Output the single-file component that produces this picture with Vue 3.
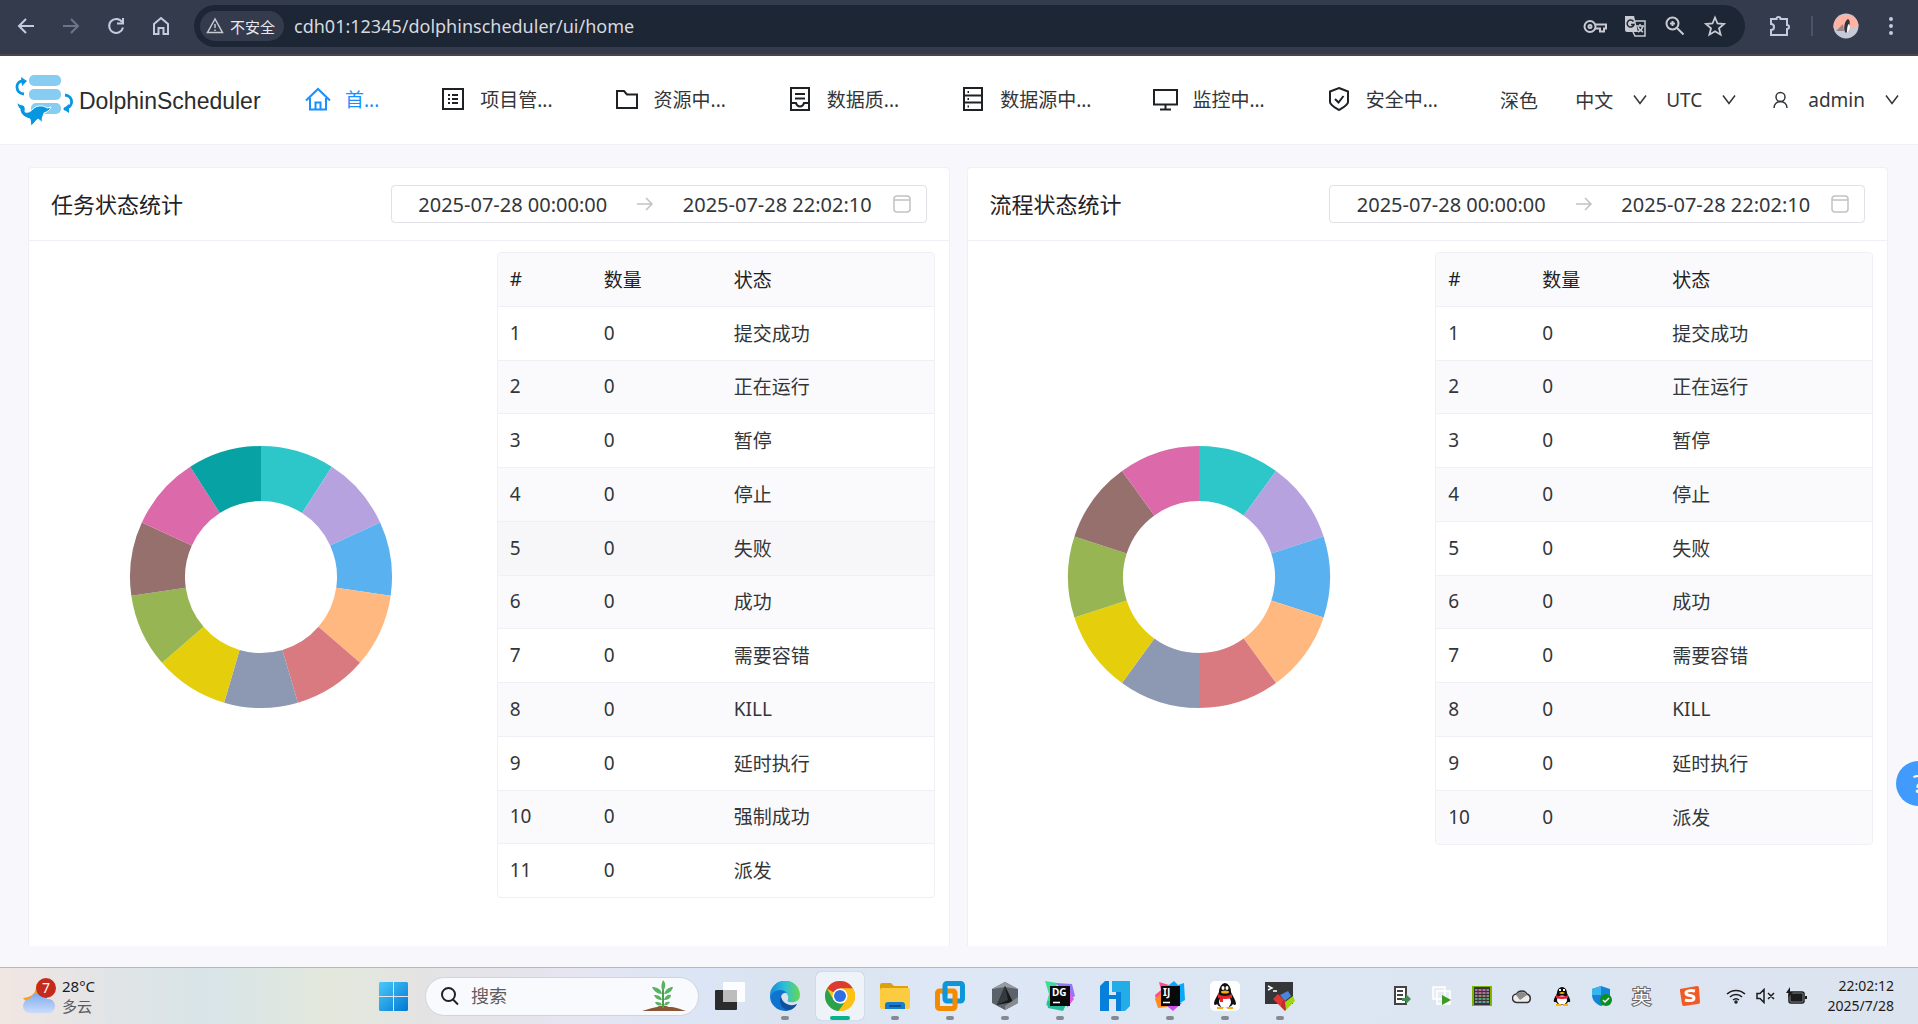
<script setup>
const navItems = [
  { label: '首...', active: true, path: 'M2 15.5L14 4l12 11.5M6 13v11.500h16V13M11.500 24v-6.500h5V24' },
  { label: '项目管...', path: 'M4 4h20v20H4zM9 10h2M9 14h2M9 18h2M13 10h6M13 14h6M13 18h6' },
  { label: '资源中...', path: 'M4 6h7l3 3.500h10V23H4z' },
  { label: '数据质...', path: 'M5 3h18v22H5zM9 9h10M9 13.500h10M5 18h5c1 4.500 7 4.500 8 0h5' },
  { label: '数据源中...', path: 'M5 3h18v22H5zM5 10.500h18M5 17.500h18M8.500 7h1.500M8.500 14h1.500M8.500 21.500h1.500' },
  { label: '监控中...', path: 'M3 5h23v14.500H3zM14.500 20v4M9 24.500h11' },
  { label: '安全中...', path: 'M14 3l9 3.500v10.500c0 3-5 5.500-9 8c-4-2.500-9-5-9-8V6.500zM10 14l3.500 3.500l5-6.500' },
]

const palette = ['#2ec7c9', '#b6a2de', '#5ab1ef', '#ffb980', '#d87a80', '#8d98b3', '#e5cf0d', '#97b552', '#95706d', '#dc69aa', '#07a2a4']

const commonStates = ['提交成功', '正在运行', '暂停', '停止', '失败', '成功', '需要容错', 'KILL', '延时执行']

const panels = [
  { id: 'task', title: '任务状态统计', states: [...commonStates, '强制成功', '派发'], highlighted: 4 },
  { id: 'process', title: '流程状态统计', states: [...commonStates, '派发'], highlighted: -1 },
].map((panel) => ({ ...panel, slices: ring(panel.states.length) }))

function ring(count) {
  const outer = 131
  const inner = 76
  const point = (radius, turn) => {
    const angle = turn * 2 * Math.PI
    return `${(132 + radius * Math.sin(angle)).toFixed(2)} ${(132 - radius * Math.cos(angle)).toFixed(2)}`
  }
  return Array.from({ length: count }, (_, i) => {
    const a = i / count
    const b = (i + 1) / count
    return {
      fill: palette[i],
      d: `M${point(outer, a)}A${outer} ${outer} 0 0 1 ${point(outer, b)}L${point(inner, b)}A${inner} ${inner} 0 0 0 ${point(inner, a)}Z`,
    }
  })
}
</script>

<template>
  <div class="screen">
    <div class="toolbar">
      <div class="tool-nav">
        <button aria-label="后退"><svg width="22" height="22" viewBox="0 0 22 22"><path d="M19 11H4M11 4l-7 7l7 7" /></svg></button>
        <button aria-label="前进" class="dim"><svg width="22" height="22" viewBox="0 0 22 22"><path d="M3 11h15M11 4l7 7l-7 7" /></svg></button>
        <button aria-label="刷新"><svg width="22" height="22" viewBox="0 0 22 22"><path d="M17 7A7 7 0 1 0 18 12.500M18 3v5.500h-6" /></svg></button>
        <button aria-label="主页"><svg width="22" height="22" viewBox="0 0 22 22"><path d="M4 9l7-6l7 6v10h-4.500v-6h-5v6H4z" /></svg></button>
      </div>
      <div class="omnibox">
        <button class="chip">
          <svg width="18" height="18" viewBox="0 0 18 18"><path d="M9 2L1.500 15.500h15zM9 7v4M9 12.500v1.500" /></svg>
          <span>不安全</span>
        </button>
        <input class="url" aria-label="地址" value="cdh01:12345/dolphinscheduler/ui/home" />
        <div class="omni-icons">
          <button aria-label="密码"><svg width="24" height="24" viewBox="0 0 24 24"><circle cx="7" cy="12.500" r="5.500" /><circle cx="7" cy="12.500" r="1.500" /><path d="M12 10.500h11v4h-2v3h-4v-3h-5" /></svg></button>
          <button aria-label="翻译">
            <svg width="24" height="24" viewBox="0 0 24 24">
              <path d="M12 7h10v15H12l-2-4M13 12h8M17 10v2M20 12c-1 4-3 5-5 6M15 13c1 3 3 4 5 5" stroke-width="1.500" />
              <path d="M2 2h9l4 16H4a2 2 0 0 1-2-2z" class="solid" />
              <path d="M10.500 7.500a3.500 3.500 0 1 0 .5 3H8" class="cut" />
            </svg>
          </button>
          <button aria-label="缩放"><svg width="24" height="24" viewBox="0 0 24 24"><circle cx="9.500" cy="9.500" r="6" /><path d="M14 14l6.500 6.500M7 9.500h5M9.500 7v5" /></svg></button>
          <button aria-label="收藏"><svg width="24" height="24" viewBox="0 0 24 24"><path d="M12 3.500l2.500 6l6.500.5l-5 4.300l1.600 6.400L12 17.300l-5.600 3.400L8 14.300L3 10l6.500-.5z" stroke-width="1.800" /></svg></button>
        </div>
      </div>
      <div class="tool-end">
        <button aria-label="扩展程序"><svg width="24" height="24" viewBox="0 0 24 24"><path d="M3 5h5.500a2 2 0 0 1 4 0H19v6a2 2 0 0 1 0 4v6H3v-5a3 3 0 0 0 0-6z" /></svg></button>
        <i class="divider"></i>
        <button aria-label="用户">
          <svg width="26" height="26" viewBox="0 0 26 26">
            <circle cx="13" cy="13" r="12.500" fill="#c5cad8" stroke="none" />
            <path d="M.5 15A12.500 12.500 0 0 1 25.500 13L14 16z" fill="#ffb3a3" stroke="none" />
            <path d="M3 18l7-7l1 7z" fill="#9b8582" stroke="none" />
            <path d="M12 19c-2-4 0-12 3-13c3 1 2 8-2 14z" fill="#33333a" stroke="none" />
            <path d="M14 19c0-5 1-8 2-8c2 3 0 7-2 8z" fill="#fff" stroke="none" />
          </svg>
        </button>
        <button aria-label="菜单"><svg width="8" height="24" viewBox="0 0 8 24"><path d="M4 5v.1M4 12v.1M4 19v.1" stroke-width="4" stroke-linecap="round" /></svg></button>
      </div>
    </div>

    <header class="header">
      <a class="brand" href="#">
        <svg width="60" height="52" viewBox="0 0 60 52">
          <g fill="#86cdf1"><rect x="14" y="1" width="32" height="11" rx="5" /><rect x="14" y="15" width="32" height="11" rx="5" /><rect x="16" y="29" width="30" height="11" rx="5" /></g>
          <g fill="none" stroke="#0797e0" stroke-width="2.800"><path d="M9 20C0 19 0 8 7 7" /><path d="M49 35c10-1 10-13 1-14" /></g>
          <path d="M6 3l6 4l-5 5zM54 30l-6 5l6 4z" fill="#0797e0" />
          <path d="M2 28c1 2 4 3 6 3c3 2 2 5 2 7c4 1 6-1 8-3c4-4 10-4 14-1l4-1c-1 3-4 5-7 6c-1 4-3 6-1 10l-5-4c-2 1-3 4-7 7l-1-7C8 43 5 39 5 35c-2-2-3-4-3-7z" fill="#0797e0" stroke="#fff" stroke-width="1" />
        </svg>
        <span>DolphinScheduler</span>
      </a>
      <nav class="nav">
        <a v-for="item in navItems" :key="item.label" href="#" :class="{ active: item.active }">
          <svg width="28" height="28" viewBox="0 0 28 28"><path :d="item.path" /></svg>
          <span>{{ item.label }}</span>
        </a>
      </nav>
      <div class="settings">
        <button>深色</button>
        <button>中文<svg width="14" height="12" viewBox="0 0 14 12"><path d="M1 1.500l6 8l6-8" /></svg></button>
        <button class="zone">UTC<svg width="14" height="12" viewBox="0 0 14 12"><path d="M1 1.500l6 8l6-8" /></svg></button>
        <button>
          <svg width="15" height="18" viewBox="0 0 15 18"><circle cx="7.500" cy="6" r="4.500" /><path d="M1 17c0-4 3-6.500 6.500-6.500S14 13 14 17" /></svg>
          admin<svg width="14" height="12" viewBox="0 0 14 12"><path d="M1 1.500l6 8l6-8" /></svg>
        </button>
      </div>
    </header>

    <main class="content">
      <section v-for="panel in panels" :key="panel.id" class="card">
        <div class="card-head">
          <h2>{{ panel.title }}</h2>
          <div class="picker">
            <input value="2025-07-28 00:00:00" :aria-label="panel.title + '开始时间'" />
            <svg width="18" height="16" viewBox="0 0 18 16"><path d="M1 8h15M10 2l6 6l-6 6" /></svg>
            <input value="2025-07-28 22:02:10" :aria-label="panel.title + '结束时间'" />
            <svg width="18" height="18" viewBox="0 0 18 18"><rect x="1" y="1" width="16" height="16" rx="3" /><path d="M1 5h16" /></svg>
          </div>
        </div>
        <div class="card-body">
          <div class="chart">
            <svg width="264" height="264" viewBox="0 0 264 264" role="img" :aria-label="panel.title">
              <path v-for="slice in panel.slices" :key="slice.fill" :d="slice.d" :fill="slice.fill" />
            </svg>
          </div>
          <div class="table-box">
            <table>
              <thead>
                <tr><th class="col-index">#</th><th class="col-count">数量</th><th>状态</th></tr>
              </thead>
              <tbody>
                <tr v-for="(state, i) in panel.states" :key="state" :class="{ hover: i === panel.highlighted }">
                  <td>{{ i + 1 }}</td><td>0</td><td>{{ state }}</td>
                </tr>
              </tbody>
            </table>
          </div>
        </div>
      </section>
      <button class="help" aria-label="帮助">?</button>
    </main>

    <footer class="taskbar">
      <div class="weather">
        <svg width="36" height="40" viewBox="0 0 36 40">
          <defs><linearGradient id="cloud" x1="0" y1="0" x2="0" y2="1"><stop offset="0" stop-color="#7da9ee" /><stop offset="1" stop-color="#cbdcfa" /></linearGradient></defs>
          <path d="M14 8c1 9-4 13-13 14c4 6 12 6 18 2V12z" fill="#f7a11b" />
          <path d="M8 37a7 7 0 0 1 0-14a9 9 0 0 1 17 0a7 7 0 0 1 2 14z" fill="url(#cloud)" />
          <circle cx="24" cy="12" r="10" fill="#c42b1c" />
          <text x="24" y="17" text-anchor="middle" font-size="14" fill="#fff">7</text>
        </svg>
        <div><p>28°C</p><p class="muted">多云</p></div>
      </div>
      <button class="start" aria-label="开始">
        <svg width="29" height="29" viewBox="0 0 29 29">
          <defs><linearGradient id="win" x1="0" y1="0" x2="1" y2="1"><stop offset="0" stop-color="#4cc9fa" /><stop offset="1" stop-color="#0078d4" /></linearGradient></defs>
          <path d="M1 0h13v14H0V1zM15 0h13l1 1v13H15zM0 15h14v14H1l-1-1zM15 15h14v13l-1 1H15z" fill="url(#win)" />
        </svg>
      </button>
      <label class="search">
        <svg width="20" height="20" viewBox="0 0 20 20"><circle cx="8.500" cy="8.500" r="6.500" /><path d="M13 13.500l5 5" /></svg>
        <input placeholder="搜索" aria-label="搜索" />
        <svg width="46" height="32" viewBox="0 0 46 32">
          <path d="M1 31c5-1 8-3 15-4c5-2 9-1 12 0c7 0 10 2 17 4z" fill="#8a5636" />
          <path d="M22 28V8" stroke="#4b9c4d" stroke-width="2" />
          <path d="M22 11c-3-4-1-8 0-11c3 3 3 7 0 11zM21 14c-5 0-8-3-10-7c5 0 9 2 10 7zM23 14c2-5 5-7 9-7c-1 4-4 7-9 7zM21 20c-4 0-7-2-8-5c4 0 7 1 8 5zM23 20c1-4 4-6 7-5c0 3-3 5-7 5zM21 25c-4 1-6 0-7-3c4 0 6 0 7 3zM23 25c1-3 3-4 6-3c-1 2-3 4-6 3z" fill="#58b260" />
        </svg>
      </label>
      <div class="apps">
        <button aria-label="任务视图">
          <svg width="30" height="30" viewBox="0 0 30 30"><rect x="0" y="9" width="22" height="20" rx="1" fill="#2c2c2c" /><rect x="8" y="1" width="22" height="20" rx="1" fill="#fff" opacity=".9" /><rect x="8" y="9" width="14" height="12" fill="#bdbdbd" /></svg>
        </button>
        <button aria-label="Edge" class="open">
          <svg width="30" height="30" viewBox="0 0 30 30">
            <defs><linearGradient id="edge" x1="0" y1="0" x2="1" y2="0"><stop offset="0" stop-color="#1689d8" /><stop offset=".5" stop-color="#2ebfd8" /><stop offset="1" stop-color="#69d84f" /></linearGradient></defs>
            <path d="M0 15a15 15 0 0 1 30-1c0 6-5 8-11 7c-3-1 0-2-1-6c-2-6-12-7-18 0z" fill="url(#edge)" />
            <path d="M0 15c4-7 13-8 17-3c-5-1-7 4-6 8c1 5 8 8 16 3c-3 5-7 7-12 7A15 15 0 0 1 0 15z" fill="#0f74cf" />
            <path d="M11 15c-3 6 1 14 8 14c4-1 7-4 8-6c-6 3-15 0-16-8z" fill="#10509e" />
          </svg>
        </button>
        <button aria-label="Chrome" class="open current">
          <svg width="30" height="30" viewBox="0 0 30 30">
            <circle cx="15" cy="15" r="15" fill="#fbc116" />
            <path d="M15 15L2 7.500A15 15 0 0 1 28 7.500H15z" fill="#dc3b30" />
            <path d="M2 7.500l6.500 11.300L15 22.500h6L14 30A15 15 0 0 1 2 7.500z" fill="#2ba14c" />
            <path d="M15 7.500h13A15 15 0 0 1 13.500 30l8-11z" fill="#fbc116" />
            <circle cx="15" cy="15" r="7.500" fill="#fff" /><circle cx="15" cy="15" r="6" fill="#2f6fe4" />
          </svg>
        </button>
        <button aria-label="资源管理器" class="open">
          <svg width="30" height="30" viewBox="0 0 30 30"><path d="M0 4q0-2 2-2h9l3 3h14v6H0z" fill="#dda10e" /><rect x="0" y="7" width="30" height="21" rx="2" fill="#fdcb3f" /><path d="M5 28v-4q0-3 3-3h14q3 0 3 3v4z" fill="#167ccc" /><path d="M9 25h12" stroke="#0b4f90" stroke-width="2" /></svg>
        </button>
        <button aria-label="VMware" class="open">
          <svg width="30" height="30" viewBox="0 0 30 30" fill="none" stroke-width="5"><rect x="10" y="2.500" width="17.500" height="17.500" rx="2" stroke="#0e96d6" /><rect x="2.500" y="10" width="17.500" height="17.500" rx="2" stroke="#f38b00" /><path d="M10 14V7" stroke="#0e96d6" /></svg>
        </button>
        <button aria-label="虚拟机" class="open">
          <svg width="30" height="30" viewBox="0 0 30 30"><path d="M15 1l13 7v14l-13 7l-13-7V8z" fill="#5c6269" /><path d="M15 1l13 7l-13-2L2 8z" fill="#969ca2" /><path d="M15 5l8 16l-16 3z" fill="#17191b" /><path d="M15 5l3 14l-11 5z" fill="#353a3e" /><path d="M15 29V25l13-9v6z" fill="#858b91" /></svg>
        </button>
        <button aria-label="DataGrip" class="open">
          <svg width="30" height="30" viewBox="0 0 30 30"><path d="M0 0l12 2l-4 26l-7-4l3-11z" fill="#3edb9a" /><path d="M11 2l16 1l3 12l-6 4z" fill="#9775f8" /><path d="M2 20l22-2l-6 12L3 27z" fill="#29b99d" /><path d="M24 10l5 8l-7 9z" fill="#e05ae8" /><rect x="5" y="5" width="20" height="20" fill="#090909" /><text x="7" y="15" font-size="10" font-weight="700" fill="#fff">DG</text><path d="M8 21.500h7" stroke="#fff" stroke-width="1.500" /></svg>
        </button>
        <button aria-label="FinalShell" class="open">
          <svg width="30" height="30" viewBox="0 0 30 30"><path d="M5 0h4v30H0V5z" fill="#0780dc" /><path d="M9 14h7v-3h5v19h-5V18H9z" fill="#0780dc" /><path d="M12 0h18v25l-5 5h-4V11h-9z" fill="#22ade8" /></svg>
        </button>
        <button aria-label="IntelliJ IDEA" class="open">
          <svg width="30" height="30" viewBox="0 0 30 30"><path d="M4 1l10 3v8L1 19l-1-5l6-5z" fill="#ff4c90" /><path d="M0 18l7-7l5 15l-9 1z" fill="#ff8a23" /><path d="M14 4l5-4l4 4l6-2l1 17l-8 5z" fill="#0aa8f7" /><path d="M8 22h19l-9 8z" fill="#ce4cf6" /><rect x="6" y="5" width="19" height="20" fill="#090909" /><text x="8" y="15" font-size="10" font-weight="700" fill="#fff">IJ</text><path d="M8 21.500h7" stroke="#fff" stroke-width="1.500" /></svg>
        </button>
        <button aria-label="QQ" class="open">
          <svg width="30" height="30" viewBox="0 0 30 30"><rect width="30" height="30" rx="5" fill="#fff" /><path d="M9 11a6 9 0 0 1 12 0c1 3 5 8 5 12c-1 2-3 0-3 0c-3 5-13 5-16 0c0 0-2 2-3 0c0-4 4-9 5-12z" fill="#111" /><ellipse cx="15" cy="21" rx="6" ry="6" fill="#fff" /><path d="M8 13q7 4 14 0v4q-7 2-14 0z" fill="#e4232b" /><path d="M10 16v5h3v-4z" fill="#e4232b" /><ellipse cx="13" cy="7" rx="1.500" ry="2" fill="#fff" /><ellipse cx="17" cy="7" rx="1.500" ry="2" fill="#fff" /><ellipse cx="15" cy="11" rx="4" ry="1.500" fill="#faab0a" /><path d="M7 26h6v2H7zM17 26h6v2h-6z" fill="#faab0a" /></svg>
        </button>
        <button aria-label="MobaXterm" class="open">
          <svg width="30" height="30" viewBox="0 0 30 30"><rect width="28" height="22" y="1" fill="#343638" /><path d="M3 5l4 2l-4 2M8 10h4" stroke="#fff" stroke-width="1.500" fill="none" /><path d="M8 18l5-5l6 6l-4 6z" fill="#e3342f" /><path d="M15 14l8-4l3 5l-6 5z" fill="#4a86e0" /><path d="M15 25l4-6l5 5l-4 6z" fill="#c92b2b" /><path d="M20 21l8-6l2 5l-9 9z" fill="#a5d316" /></svg>
        </button>
      </div>
      <div class="tray">
        <span><svg width="18" height="20" viewBox="0 0 18 20"><path d="M2 1h11v17H2z" fill="#fff" stroke="#444" stroke-width="2" /><path d="M4 5h6M4 9h6M4 13h6" stroke="#444" stroke-width="2" /><path d="M9 12h4V8l5 5l-5 5v-3H9z" fill="#458a58" /></svg></span>
        <span><svg width="20" height="20" viewBox="0 0 20 20"><path d="M1 1h12v12H1zM5 5h13v13H5z" fill="#e8eef6" stroke="#fff" stroke-width="1.500" /><path d="M10 9l9 5l-9 5z" fill="#3d9b22" /></svg></span>
        <span><svg width="20" height="20" viewBox="0 0 20 20"><rect width="20" height="20" fill="#76b900" /><rect x="2" y="1" width="16" height="18" fill="#3a3436" /><path d="M3 4h14M3 7h14" stroke="#b0709c" stroke-width="2" /><path d="M3 10h14" stroke="#a08078" stroke-width="2" /><path d="M3 13h14" stroke="#57a476" stroke-width="2" /><path d="M3 16h14" stroke="#679fa0" stroke-width="2" /><path d="M6 2v16M10 2v16M14 2v16" stroke="#3a3436" /></svg></span>
        <span><svg width="20" height="16" viewBox="0 0 20 16"><path d="M5 14.500a4 4 0 0 1-.5-8.500a6 6 0 0 1 10.500 0a4.500 4.500 0 0 1 .5 8.500z" fill="#eee" stroke="#333" stroke-width="1.500" /><path d="M4 7a6 5 0 0 1 11 0l-7 5z" fill="#8b8b8b" /></svg></span>
        <span><svg width="18" height="20" viewBox="0 0 18 20"><path d="M4 7a5 6 0 0 1 10 0c1 3 4 6 3 9h-2c-2 4-10 4-12 0H1c-1-3 2-6 3-9z" fill="#0b0b0b" /><ellipse cx="9" cy="14" rx="5" ry="4.500" fill="#fff" /><path d="M3 9q6 3 12 0v3q-6 2-12 0z" fill="#eb1634" /><path d="M6 7q3-2 6 0q-3 2-6 0M3 18h5v2H3zM10 18h5v2h-5z" fill="#fab609" /><path d="M7 3v2M11 3v2" stroke="#fff" stroke-width="2" /></svg></span>
        <span><svg width="20" height="20" viewBox="0 0 20 20"><path d="M9 0l9 3v6c0 5-4 9-9 11c-5-2-9-6-9-11V3z" fill="#1584d6" /><path d="M9 0v9H0V3z" fill="#39b5ee" /><circle cx="14" cy="14" r="6" fill="#0b8f21" /><path d="M11 14l2 2l4-4" stroke="#fff" stroke-width="1.500" fill="none" /></svg></span>
        <span class="lang">英</span>
        <span class="ime"><svg width="22" height="22" viewBox="0 0 22 22"><path d="M1 4l17-3q2 0 2 2l1 14q0 2-2 2L5 21q-2 0-2-2L1 6z" fill="#f15a24" /><path d="M16 6c-5-1-9 0-9 2c0 4 8 1 8 5c0 3-5 3-9 2" stroke="#fff" stroke-width="3" fill="none" /></svg></span>
        <div class="system">
          <svg width="20" height="16" viewBox="0 0 20 16"><path d="M1 6a13 13 0 0 1 18 0M4 9a8.500 8.500 0 0 1 12 0M7 12a4.500 4.500 0 0 1 6 0" /><circle cx="10" cy="14" r="1" /></svg>
          <svg width="20" height="16" viewBox="0 0 20 16"><path d="M1 5.500h3l4-4v13l-4-4H1zM12 5l6 6M18 5l-6 6" /></svg>
          <svg width="21" height="18" viewBox="0 0 21 18"><rect x="3" y="5" width="15" height="11" rx="2" /><rect x="5" y="7" width="11" height="7" fill="#1b1b1b" /><path d="M20 9v3" stroke-width="2" /><path d="M4 0L0 6h3l-1 5l5-6H4z" fill="#1b1b1b" stroke="none" /></svg>
        </div>
        <div class="clock"><p>22:02:12</p><p>2025/7/28</p></div>
      </div>
    </footer>
  </div>
</template>

<style>
body {
  margin: 0;
}
</style>

<style scoped>
.screen {
  display: flex;
  flex-direction: column;
  min-height: 100vh;
  overflow: hidden;
  background: #f7f7fc;
  color: #333639;
  font-family: "Noto Sans", "Noto Sans CJK SC", sans-serif;
  font-size: 19px;
}
.screen * {
  box-sizing: border-box;
}
svg {
  display: block;
  flex: none;
}
button,
input {
  padding: 0;
  border: 0;
  outline: 0;
  background: none;
  color: inherit;
  font: inherit;
}
a {
  color: inherit;
  text-decoration: none;
}
p,
h2 {
  margin: 0;
}

.toolbar {
  display: flex;
  align-items: center;
  height: 56px;
  padding: 0 23px 2px 15px;
  border-bottom: 2px solid #4a474c;
  background: #343b4c;
}
.toolbar svg {
  fill: none;
  stroke: #c3cbe0;
  stroke-width: 2;
}
.tool-nav {
  display: flex;
  gap: 23px;
  margin-right: 22px;
}
.tool-nav .dim {
  opacity: 0.4;
}
.omnibox {
  display: flex;
  flex: 1;
  align-items: center;
  height: 42px;
  padding: 0 18px 0 6px;
  border-radius: 21px;
  background: #1d2635;
}
.omnibox svg {
  stroke: #c7cad1;
}
.omnibox .solid {
  fill: #c7cad1;
  stroke: none;
}
.omnibox .cut {
  stroke: #1d2635;
  stroke-width: 1.500;
}
.chip {
  display: flex;
  align-items: center;
  gap: 6px;
  height: 30px;
  padding: 0 9px 0 6px;
  border-radius: 15px;
  background: #343b4c;
  color: #e6e9f0;
  font-size: 15px;
}
.chip svg {
  stroke-width: 1.5;
}
.url {
  flex: 1;
  margin-left: 10px;
  color: #d6d9df;
  font-size: 18px;
}
.omni-icons {
  display: flex;
  gap: 16px;
}
.tool-end {
  display: flex;
  align-items: center;
  margin-left: 23px;
}
.divider {
  width: 2px;
  height: 20px;
  margin: 0 20px 0 19px;
  background: #4c5467;
}
.tool-end button:last-child {
  margin-left: 28px;
}

.header {
  display: flex;
  align-items: center;
  height: 89px;
  padding: 0 19px 0 15px;
  border-bottom: 1px solid #efeff5;
  background: #fff;
}
.brand {
  display: flex;
  flex: 0 0 289px;
  align-items: center;
  gap: 4px;
  color: #2c2c2c;
  font-family: "Liberation Sans", sans-serif;
  font-size: 23px;
}
.brand span {
  padding-top: 2px;
}
.nav {
  display: flex;
  gap: 60px;
}
.nav a {
  display: flex;
  align-items: center;
  gap: 13px;
  padding-bottom: 2px;
  white-space: nowrap;
}
.nav svg {
  fill: none;
  stroke: #1f2225;
  stroke-width: 2;
}
.nav .active {
  color: #1890ff;
}
.nav .active svg {
  stroke: #1890ff;
}
.settings {
  display: flex;
  gap: 37px;
  margin-left: auto;
}
.settings button {
  display: flex;
  align-items: center;
  gap: 20px;
  white-space: nowrap;
}
.settings .zone {
  margin-left: -18px;
}
.settings svg {
  fill: none;
  stroke: #333639;
  stroke-width: 1.5;
}

.content {
  position: relative;
  display: grid;
  flex: 1;
  grid-template-columns: 1fr 1fr;
  gap: 17px;
  padding: 22px 30px 21px 28px;
}
.card {
  border: 1px solid #efeff5;
  border-bottom: 0;
  border-radius: 4px 4px 0 0;
  background: #fff;
}
.card-head {
  display: flex;
  align-items: center;
  justify-content: space-between;
  height: 73px;
  padding: 0 22px;
  border-bottom: 1px solid #efeff5;
}
h2 {
  padding-bottom: 2px;
  color: #1f2225;
  font-size: 22px;
  font-weight: 400;
}
.picker {
  display: grid;
  flex: 0 1 536px;
  grid-template-columns: 1fr 50px 1fr 26px;
  align-items: center;
  justify-items: center;
  height: 38px;
  padding: 0 15px 0 14px;
  border: 1px solid #e0e0e6;
  border-radius: 4px;
}
.picker input {
  width: 100%;
  min-width: 0;
  font-size: 20px;
  text-align: center;
}
.picker svg {
  fill: none;
  stroke: #c2c2c2;
  stroke-width: 1.500;
}
.picker svg:last-child {
  justify-self: end;
}
.card-body {
  display: grid;
  grid-template-columns: 1fr 1fr;
  align-items: start;
  gap: 17px;
  padding: 11px 14px 0 13px;
}
.chart {
  display: grid;
  height: 650px;
  place-items: center;
}
.table-box {
  overflow: hidden;
  border: 1px solid #efeff5;
  border-radius: 4px;
}
table {
  width: 100%;
  border-spacing: 0;
  table-layout: fixed;
}
th,
td {
  height: 54px;
  padding: 0 12px 2px;
  border-bottom: 1px solid #efeff5;
  font-weight: 400;
  text-align: left;
}
tr:nth-child(4n + 2) td {
  height: 53px;
}
tr:last-child td {
  height: 53px;
  border-bottom: 0;
}
th {
  background: #fafafc;
  color: #1f2225;
}
.col-index {
  width: 94px;
}
.col-count {
  width: 130px;
}
tbody tr:nth-child(even) {
  background: #fafafc;
}
tbody .hover {
  background: #f7f7fa;
}
.help {
  position: absolute;
  top: 616px;
  right: -23px;
  width: 45px;
  height: 45px;
  border-radius: 50%;
  background: #409bfc;
  color: #fff;
  font-size: 26px;
  line-height: 45px;
}

.taskbar {
  display: flex;
  align-items: center;
  height: 57px;
  padding: 0 24px 0 22px;
  border-top: 1px solid #b4b7bd;
  background: linear-gradient(90deg, #f1e6e2 0, #e1e4e7 110px, #d8e4e8 210px, #e3e8dc 330px, #e4e3e3 420px, #e6e5f2 580px, #dbe5f5 700px, #dae2ee 800px, #dde7f5 930px, #dbe4ef 100%);
  color: #1b1b1b;
}
.weather {
  display: flex;
  flex: 0 0 357px;
  align-items: center;
  gap: 4px;
  font-size: 15px;
  line-height: 20px;
}
.muted {
  color: #5b5b5e;
}
.search {
  display: flex;
  align-items: center;
  width: 274px;
  height: 39px;
  margin: 0 7px 0 17px;
  padding: 0 11px 0 14px;
  border: 1px solid #d1d4da;
  border-radius: 20px;
  background: #f8fafd;
}
.search svg:first-child {
  fill: none;
  stroke: #222;
  stroke-width: 2;
}
.search input {
  flex: 1;
  min-width: 0;
  margin-left: 11px;
  font-size: 18px;
}
.search input::placeholder {
  color: #5d5d5d;
}
.apps {
  display: flex;
  gap: 7px;
}
.apps button {
  position: relative;
  display: grid;
  width: 48px;
  height: 48px;
  border-radius: 5px;
  place-items: center;
}
.apps .current {
  background: #eef3fa;
  box-shadow: 0 0 1px #8d96a5;
}
.open::after {
  position: absolute;
  bottom: 0;
  left: 50%;
  width: 8px;
  height: 4px;
  margin-left: -4px;
  border-radius: 2px;
  background: #858a91;
  content: "";
}
.current::after {
  width: 20px;
  margin-left: -10px;
  background: #05b28e;
}
.tray {
  display: flex;
  align-items: center;
  margin-left: auto;
}
.tray span {
  display: grid;
  width: 40px;
  place-items: center;
}
.tray .lang {
  color: #fff;
  -webkit-text-stroke: 2px #666;
  paint-order: stroke fill;
}
.tray .ime {
  width: 56px;
}
.system {
  display: flex;
  align-items: center;
  gap: 10px;
  margin: 0 21px 0 8px;
}
.system svg {
  fill: none;
  stroke: #1b1b1b;
  stroke-width: 1.500;
}
.clock {
  font-size: 14px;
  line-height: 20px;
  text-align: right;
}
</style>
